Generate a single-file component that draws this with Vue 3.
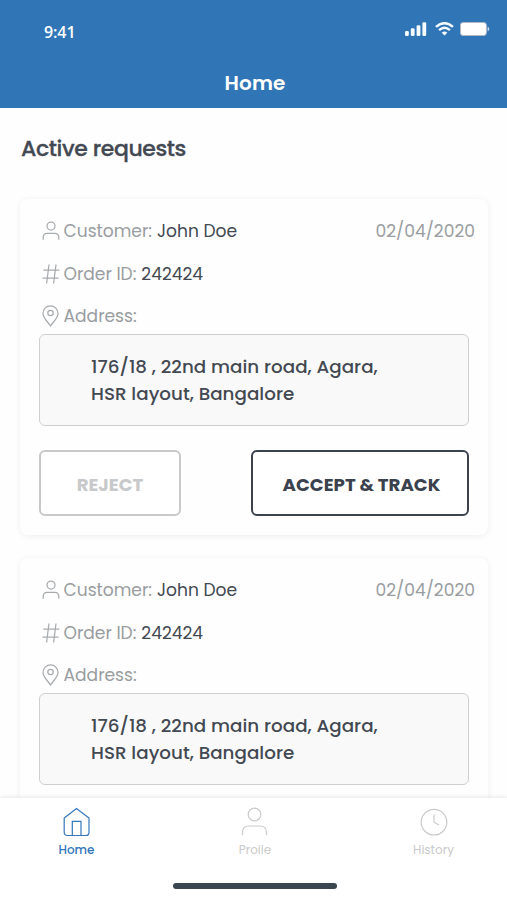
<script setup>
const requests = [
  { id: 1, customer: 'John Doe', order: '242424', date: '02/04/2020', showActions: true },
  { id: 2, customer: 'John Doe', order: '242424', date: '02/04/2020', showActions: false },
]
</script>

<template>
  <div class="screen">
    <header class="header">
      <div class="status">
        <span class="time">9:41</span>
        <div class="indicators">
          <svg class="signal" width="22" height="14" viewBox="0 0 22 14" fill="currentColor">
            <rect x="0" y="9" width="3.8" height="5" rx="1.2" />
            <rect x="5.8" y="6.3" width="3.8" height="7.7" rx="1.2" />
            <rect x="11.6" y="3.2" width="3.8" height="10.8" rx="1.2" />
            <rect x="17.4" y="0.2" width="3.8" height="13.8" rx="1.2" />
          </svg>
          <svg class="wifi" width="19" height="14" viewBox="0 0 19 14" fill="none" stroke="currentColor">
            <path d="M1 4.9 Q9.5 -2.5 18 4.9" stroke-width="2.5" />
            <path d="M4.1 8.2 Q9.5 3.3 14.9 8.2" stroke-width="2.4" />
            <path d="M6.7 10.7 Q9.5 8.5 12.3 10.7 L9.5 13.6Z" fill="currentColor" stroke="none" />
          </svg>
          <svg class="battery" width="30" height="14" viewBox="0 0 30 14">
            <rect x="0.4" y="0.5" width="26" height="13" rx="2.8" fill="#fff" stroke="#b4b9c2" stroke-width="0.9" />
            <path d="M27.6 4.8 Q29.3 5.3 29.3 7 Q29.3 8.7 27.6 9.2Z" fill="#c5daee" />
          </svg>
        </div>
      </div>
      <h1 class="title">Home</h1>
    </header>

    <main class="content">
      <h2 class="heading">Active requests</h2>
      <article v-for="r in requests" :key="r.id" class="card">
        <div class="row">
          <svg class="icon" width="18" height="20" viewBox="0 0 18 20">
            <circle cx="9" cy="5" r="4" />
            <path d="M1.2 18.8V16.5Q1.2 12.4 5.3 12.4H12.7Q16.8 12.4 16.8 16.5V18.8" />
          </svg>
          <span class="label">Customer:</span>
          <span class="value">{{ r.customer }}</span>
          <time class="date">{{ r.date }}</time>
        </div>
        <div class="row">
          <svg class="icon" width="18" height="20" viewBox="0 0 18 20">
            <path d="M7 .5 4.6 19.5M14 .5 11.6 19.5M1.3 6H17.3M.5 14H16.5" />
          </svg>
          <span class="label">Order ID:</span>
          <span class="value">{{ r.order }}</span>
        </div>
        <div class="row">
          <svg class="icon" width="18" height="22" viewBox="0 0 18 22">
            <path d="M8.5 21C5.6 16.5 1 13 1 8.4A7.5 7.5 0 0 1 16 8.4C16 13 11.4 16.5 8.5 21Z" />
            <circle cx="8.5" cy="8" r="2.7" />
          </svg>
          <span class="label">Address:</span>
        </div>
        <address class="address">
          <span>176/18 , 22nd main road, Agara,</span>
          <span>HSR layout, Bangalore</span>
        </address>
        <div v-if="r.showActions" class="actions">
          <button class="button reject">REJECT</button>
          <button class="button accept">ACCEPT &amp; TRACK</button>
        </div>
      </article>
    </main>

    <footer class="footer">
      <nav class="tabs">
        <a class="tab active">
          <svg width="28" height="30" viewBox="0 0 28 30">
            <path d="M1.2 11 13.5 1.5 26 11V25.2Q26 28.5 22.7 28.5H4.5Q1.2 28.5 1.2 25.2Z" />
            <path d="M9.3 28.5V14.3H18V28.5" />
          </svg>
          <span>Home</span>
        </a>
        <a class="tab">
          <svg width="28" height="30" viewBox="0 0 28 30">
            <circle cx="13.5" cy="7.5" r="6.3" />
            <path d="M1.5 28.2V25.5Q1.5 19 8 19H19Q25.5 19 25.5 25.5V28.2" />
          </svg>
          <span>Proile</span>
        </a>
        <a class="tab">
          <svg width="28" height="30" viewBox="0 0 28 30">
            <circle cx="14" cy="15.2" r="12.8" />
            <path d="M14 7.5V15.2L19 18" />
          </svg>
          <span>History</span>
        </a>
      </nav>
      <div class="home-indicator"></div>
    </footer>
  </div>
</template>

<style>
body {
  margin: 0;
  background: #fff;
}
</style>

<style scoped>
.screen {
  width: 507px;
  height: 900px;
  display: flex;
  flex-direction: column;
  overflow: hidden;
  background: #fefefe;
  color: #434952;
  font-family: Poppins, Inter, "Liberation Sans", sans-serif;
}
.header {
  height: 108px;
  flex: none;
  background: #3076b7;
  color: #fff;
}
.status {
  height: 42px;
  box-sizing: border-box;
  padding: 20px 17px 0 44px;
  display: flex;
  justify-content: space-between;
}
.time {
  font: 600 16px/24px "Open Sans", "Noto Sans", sans-serif;
  letter-spacing: -0.1px;
}
.indicators {
  display: flex;
  padding-top: 2px;
  color: #f5fbff;
}
.wifi {
  margin: 0 6px 0 8px;
}
.title {
  margin: 27px 0 0 3px;
  text-align: center;
  font-size: 20px;
  line-height: 28px;
  font-weight: 600;
  letter-spacing: 0.1px;
}
.content {
  flex: 1;
  min-height: 0;
  overflow: hidden;
  padding: 0 19px 0 20px;
}
.heading {
  margin: 26px 0 35px 1px;
  font-size: 22px;
  line-height: 30px;
  font-weight: 500;
  letter-spacing: -0.4px;
  -webkit-text-stroke: 0.3px currentColor;
}
.card {
  box-sizing: border-box;
  height: 336px;
  margin-bottom: 23px;
  padding: 17px 19px 0;
  border-radius: 8px;
  background: #fefefe;
  box-shadow: 0 1px 6px rgba(0, 0, 0, 0.07);
}
.row {
  display: flex;
  align-items: center;
  height: 30px;
  margin: 0 -6px 12.6px 3px;
  font-size: 17.1px;
  white-space: nowrap;
}
.row:nth-child(3) {
  margin-bottom: 2.8px;
}
.icon {
  flex: none;
  margin-right: 3.5px;
  fill: none;
  stroke: #a8abae;
  stroke-width: 1.25;
}
.label {
  flex: none;
  color: #999da1;
}
.value {
  margin-left: 5px;
}
.date {
  margin-left: auto;
  color: #999da1;
}
.address {
  box-sizing: border-box;
  height: 92px;
  padding: 18px 51px;
  border: 1.5px solid #cdcfd0;
  border-radius: 6px;
  background: #f9f9f9;
  font-style: normal;
  font-weight: 500;
  font-size: 18.3px;
  letter-spacing: 0.03px;
  line-height: 27px;
  white-space: nowrap;
}
.address span {
  display: block;
}
.actions {
  display: flex;
  justify-content: space-between;
  margin-top: 24px;
}
.button {
  box-sizing: border-box;
  height: 66px;
  padding: 3px 0 0;
  border: 2px solid;
  border-radius: 6px;
  background: #fff;
  font-family: inherit;
  font-size: 18.2px;
  font-weight: 700;
}
.reject {
  width: 142px;
  color: #c7c9ca;
}
.accept {
  width: 218px;
  padding-left: 3px;
  color: #3b424e;
}
.footer {
  position: relative;
  flex: none;
  height: 102px;
  background: #fff;
  box-shadow: 0 -1px 4px rgba(0, 0, 0, 0.09);
}
.tabs {
  display: flex;
  justify-content: space-between;
  padding: 9px 40px 0 43px;
}
.tab {
  width: 67px;
  display: flex;
  flex-direction: column;
  align-items: center;
  color: #c9caca;
  font-size: 12px;
  line-height: 18px;
}
.tab svg {
  fill: none;
  stroke: currentColor;
  stroke-width: 1.2;
  margin-bottom: 4px;
}
.active {
  color: #3278bd;
  font-weight: 500;
}
.home-indicator {
  width: 164px;
  height: 6px;
  margin: 24px auto 0 173px;
  border-radius: 3px;
  background: #394650;
}
</style>
